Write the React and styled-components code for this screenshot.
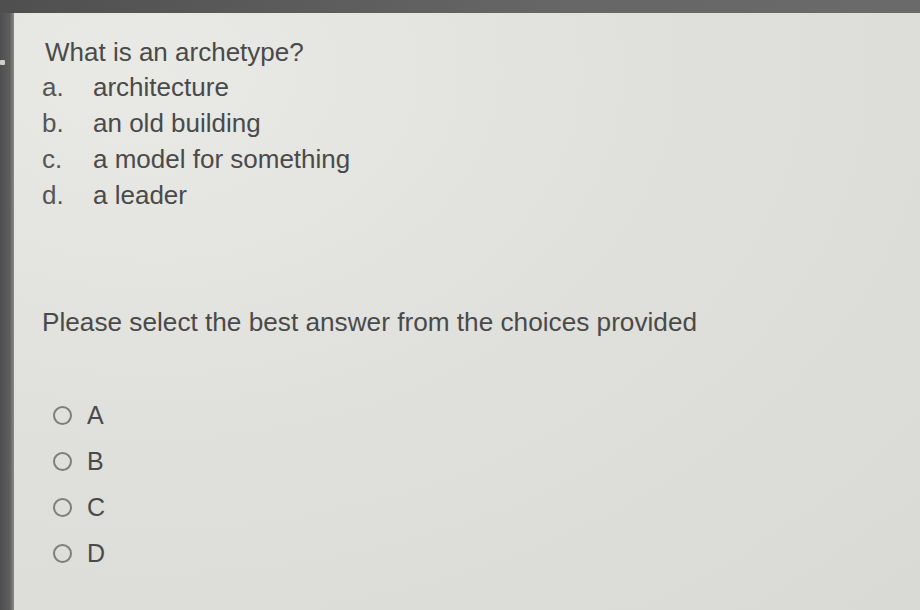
import styled, { createGlobalStyle } from "styled-components"

const GlobalStyle = createGlobalStyle`
html, body {
  margin:0;
  padding:0;
  width:920px;
  height:610px;
  overflow:hidden;
  background:#5b5b5b;
}
`

const Frame = styled.div`
width:920px;
height:610px;
display:flex;
flex-direction:column;
background:#585858;
`
const TopBezel = styled.div`
height:13px;
flex-shrink:0;
background:linear-gradient(90deg,#4f4f4f,#666 60%,#6a6a6a);
`
const Body = styled.div`
flex:1;
display:flex;
`
const SideBezel = styled.div`
width:14px;
flex-shrink:0;
background:linear-gradient(90deg,#4e4e4e,#5e5e5e 70%,#8a8a88);
`
const Glint = styled.div`
width:5px;
height:5px;
margin-top:47px;
background:#cfcfcc;
border-radius:1px;
`
const Screen = styled.div`
flex:1;
padding:24px 0 0 28px;
background:radial-gradient(ellipse at 15% 10%,#e9e9e6 0%,#e0e0dc 45%,#d9d9d5 100%);
font-family:"Liberation Sans", Arial, sans-serif;
color:#4a4a4a;
`
const Question = styled.div`
font-size:26px;
line-height:30px;
margin-left:3px;
`
const Options = styled.div`
display:flex;
flex-direction:column;
margin-top:2px;
`
const Option = styled.div`
display:flex;
font-size:26px;
line-height:36px;
`
const Letter = styled.span`
width:51px;
color:#555;
`
const Prompt = styled.div`
margin-top:94px;
font-size:26.2px;
line-height:30px;
`
const Choices = styled.div`
display:flex;
flex-direction:column;
gap:18px;
margin-top:64px;
padding-left:11px;
`
const Choice = styled.label`
display:flex;
align-items:center;
gap:15px;
height:28px;
font-size:25px;
`
const Radio = styled.span`
width:15px;
height:15px;
border:2.2px solid #7e7e7e;
border-radius:50%;
`

const options = [
  ["a.", "architecture"],
  ["b.", "an old building"],
  ["c.", "a model for something"],
  ["d.", "a leader"],
]

const App = () => {
  return (
    <Frame>
      <GlobalStyle />
      <TopBezel />
      <Body>
        <SideBezel>
          <Glint />
        </SideBezel>
        <Screen>
          <Question>What is an archetype?</Question>
          <Options>
            {options.map(([l, t]) => (
              <Option key={l}>
                <Letter>{l}</Letter>
                <span>{t}</span>
              </Option>
            ))}
          </Options>
          <Prompt>Please select the best answer from the choices provided</Prompt>
          <Choices>
            {["A", "B", "C", "D"].map((c) => (
              <Choice key={c}>
                <Radio />
                {c}
              </Choice>
            ))}
          </Choices>
        </Screen>
      </Body>
    </Frame>
  )
}

export default App
